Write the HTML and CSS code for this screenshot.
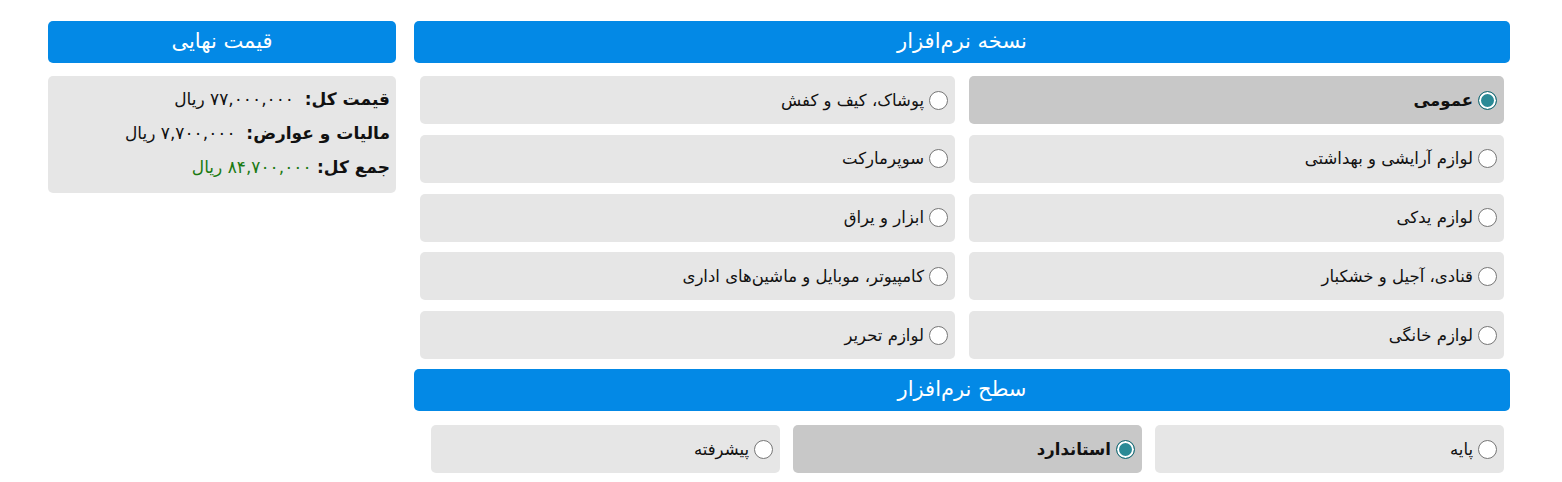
FILE: index.html
```html
<!DOCTYPE html>
<html lang="fa" dir="rtl">
<head>
    <meta charset="UTF-8">
    <meta name="viewport" content="width=device-width, initial-scale=1.0">
    <title>انتخاب نرم‌افزار</title>
    <link rel="stylesheet" href="styles.css">
</head>
<body>
    <div id="wrap">
        <div id="software">
            <div class="title">نسخه نرم‌افزار</div>
            <div class="versions">
                <label class="opt selected"><input type="radio" name="version" checked> عمومی</label>
                <label class="opt"><input type="radio" name="version"> پوشاک، کیف و کفش</label>
                <label class="opt"><input type="radio" name="version"> لوازم آرایشی و بهداشتی</label>
                <label class="opt"><input type="radio" name="version"> سوپرمارکت</label>
                <label class="opt"><input type="radio" name="version"> لوازم یدکی</label>
                <label class="opt"><input type="radio" name="version"> ابزار و یراق</label>
                <label class="opt"><input type="radio" name="version"> قنادی، آجیل و خشکبار</label>
                <label class="opt"><input type="radio" name="version"> کامپیوتر، موبایل و ماشین‌های اداری</label>
                <label class="opt"><input type="radio" name="version"> لوازم خانگی</label>
                <label class="opt"><input type="radio" name="version"> لوازم تحریر</label>
            </div>
            <div class="title">سطح نرم‌افزار</div>
            <div class="levels">
                <label class="opt"><input type="radio" name="level"> پایه</label>
                <label class="opt selected"><input type="radio" name="level" checked> استاندارد</label>
                <label class="opt"><input type="radio" name="level"> پیشرفته</label>
            </div>
        </div>
        <div id="price">
            <div class="title">قیمت نهایی</div>
            <div class="priceBox">
                <div class="line"><b>قیمت کل:</b>&nbsp; ۷۷,۰۰۰,۰۰۰ ریال</div>
                <div class="line"><b>مالیات و عوارض:</b>&nbsp; ۷,۷۰۰,۰۰۰ ریال</div>
                <div class="line"><b>جمع کل:</b> <span class="total">۸۴,۷۰۰,۰۰۰ ریال</span></div>
            </div>
        </div>
    </div>
</body>
</html>
```

FILE: styles.css
```css
body{
    margin: 0;
    font-family: "DejaVu Sans", sans-serif;
    font-size: 16.5px;
    color: #111;
}
#wrap{
    display: flex;
    gap: 18px;
    padding: 21px 52px 0 48px;
}
#software{
    flex: 1;
}
#price{
    width: 348px;
}
.title{
    background-color: #0389e6;
    color: white;
    height: 42px;
    line-height: 40px;
    border-radius: 5px;
    text-align: center;
    font-size: 21px;
}
.versions{
    display: grid;
    grid-template-columns: 1fr 1fr;
    column-gap: 14px;
    row-gap: 10.75px;
    padding: 13px 6px 10px 6px;
}
.levels{
    display: grid;
    grid-template-columns: 1fr 1fr 1fr;
    gap: 13px;
    padding: 14px 6px 0 17px;
}
.opt{
    display: flex;
    align-items: center;
    height: 48px;
    padding-right: 7px;
    background-color: #e6e6e6;
    border-radius: 5px;
    box-sizing: border-box;
}
.opt.selected{
    background-color: #c8c8c8;
    font-weight: bold;
}
.opt input{
    appearance: none;
    flex: none;
    width: 19px;
    height: 19px;
    margin: 0 0 0 5px;
    border: 1px solid #767676;
    border-radius: 50%;
    background-color: white;
    box-sizing: border-box;
}
.opt input:checked{
    border-color: #1d6b75;
    background-color: #2b8a96;
    box-shadow: inset 0 0 0 2px white;
}
.priceBox{
    margin-top: 13px;
    background-color: #e6e6e6;
    border-radius: 5px;
    padding: 6px 6px 8px 6px;
    height: 117px;
    box-sizing: border-box;
    font-size: 17px;
}
.line{
    height: 34px;
    line-height: 34px;
}
.total{
    color: #1a7a12;
}
```
